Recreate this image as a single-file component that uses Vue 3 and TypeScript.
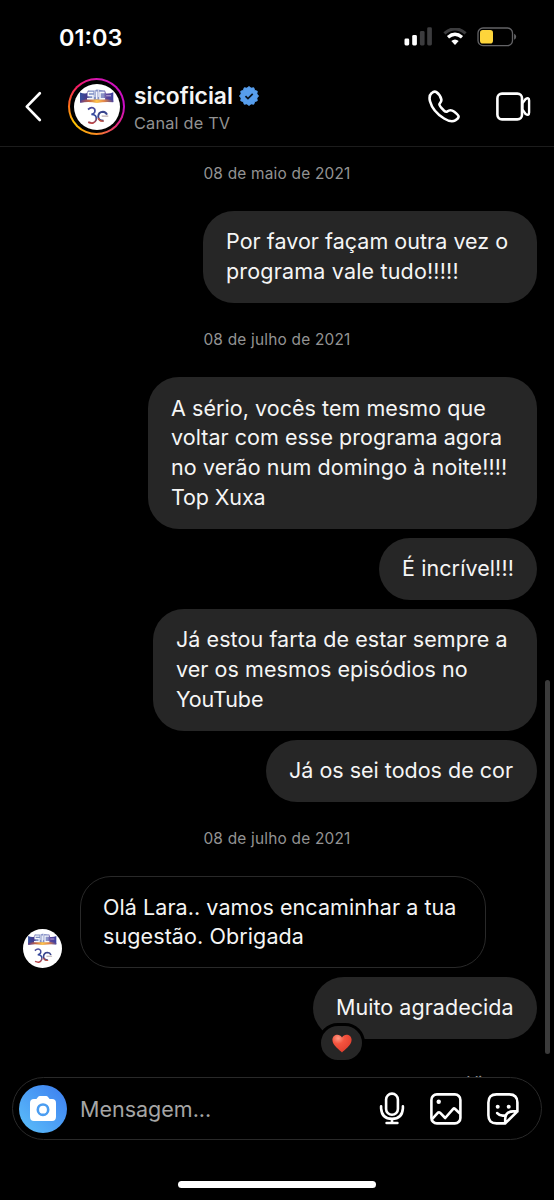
<script setup lang="ts">
interface Line {
  text: string
  spacing?: number
}
interface Message {
  id: number
  incoming?: boolean
  reaction?: boolean
  width: number
  lines: Line[]
}
interface Group {
  date: string
  messages: Message[]
}

const groups: Group[] = [
  {
    date: '08 de maio de 2021',
    messages: [
      {
        id: 1,
        width: 334,
        lines: [{ text: 'Por favor façam outra vez o', spacing: 0.03 }, { text: 'programa vale tudo!!!!!', spacing: 0.18 }],
      },
    ],
  },
  {
    date: '08 de julho de 2021',
    messages: [
      {
        id: 2,
        width: 389,
        lines: [
          { text: 'A sério, vocês tem mesmo que', spacing: 0.05 },
          { text: 'voltar com esse programa agora', spacing: 0.05 },
          { text: 'no verão num domingo à noite!!!!', spacing: 0.1 },
          { text: 'Top Xuxa', spacing: -0.12 },
        ],
      },
      { id: 3, width: 158, lines: [{ text: 'É incrível!!!', spacing: 0.09 }] },
      {
        id: 4,
        width: 384,
        lines: [
          { text: 'Já estou farta de estar sempre a', spacing: 0.07 },
          { text: 'ver os mesmos episódios no', spacing: 0.07 },
          { text: 'YouTube', spacing: -0.12 },
        ],
      },
      { id: 5, width: 271, lines: [{ text: 'Já os sei todos de cor' }] },
    ],
  },
  {
    date: '08 de julho de 2021',
    messages: [
      {
        id: 6,
        incoming: true,
        width: 406,
        lines: [
          { text: 'Olá Lara.. vamos encaminhar a tua', spacing: 0.07 },
          { text: 'sugestão. Obrigada', spacing: 0.1 },
        ],
      },
      { id: 7, reaction: true, width: 224, lines: [{ text: 'Muito agradecida', spacing: 0.04 }] },
    ],
  },
]

const sealPoints = Array.from({ length: 24 }, (_, i) => {
  const radius = i % 2 ? 8.6 : 10.1
  const angle = (i * Math.PI) / 12
  return `${(10.5 + radius * Math.sin(angle)).toFixed(2)},${(10.5 - radius * Math.cos(angle)).toFixed(2)}`
}).join(' ')
</script>

<template>
  <svg class="defs" width="0" height="0" aria-hidden="true">
    <defs>
      <linearGradient id="band" x1="0" y1="0" x2="1" y2="0">
        <stop offset="0" stop-color="#34509f" />
        <stop offset=".2" stop-color="#453a8c" />
        <stop offset=".3" stop-color="#7c8fc4" />
        <stop offset=".7" stop-color="#8c93c8" />
        <stop offset=".8" stop-color="#5d4399" />
        <stop offset="1" stop-color="#3a41a0" />
      </linearGradient>
      <linearGradient id="glow" x1="0" y1="0" x2="1" y2="0">
        <stop offset="0" stop-color="#5b3c8c" />
        <stop offset=".28" stop-color="#c9663f" />
        <stop offset=".5" stop-color="#ffc64c" />
        <stop offset=".72" stop-color="#e58749" />
        <stop offset="1" stop-color="#4c439b" />
      </linearGradient>
      <linearGradient id="three" x1="0" y1="0" x2="0" y2="1">
        <stop offset="0" stop-color="#49499a" />
        <stop offset=".6" stop-color="#304b9f" />
        <stop offset="1" stop-color="#bd4343" />
      </linearGradient>
      <symbol id="logo" viewBox="0 0 46 46">
        <circle cx="23" cy="23" r="23" fill="#fff" />
        <path d="M6 8.4Q9.5 9.8 12.6 9.3L14 6.4H20L22.8 5.6L31 6.4L32 9.4Q36 9.8 39.3 8.2V18Q31 17 23 18.2Q14 17 6 18.4Z" fill="url(#band)" />
        <path d="M6.2 16.6Q14 14.8 23 15.6Q32 14.8 39.2 16.4V18.2Q31 17.4 23 18.9Q14 17.4 6.2 18.8Z" fill="url(#glow)" />
        <path d="M19.4 8.4H14.3V11.4H19V14.8H13M22.7 7.6V15M30.6 8.4H26V14.8H31" fill="none" stroke="#f4f6fc" stroke-width="1.5" />
        <path d="M20.9 5.8V13M24.4 5.8V13" stroke="#fff" stroke-width=".7" />
        <path d="M32.2 11.8H37" stroke="#c6b5dc" stroke-width="1" />
        <path d="M14 25.5Q18.2 22 20.7 25.2Q22 29.5 17.4 30.3Q23.1 30.5 22.2 35.8Q20.3 40.8 14.2 38.2" fill="none" stroke="url(#three)" stroke-width="1.8" />
        <path d="M29.5 36.8Q24.3 36.7 24.2 32.6Q24.5 27.8 29 27.7Q31.8 27.8 33 30.7" fill="none" stroke="#39458d" stroke-width="1.9" />
        <path d="M24.3 34Q25.4 37.8 29.7 37" fill="none" stroke="#c4503e" stroke-width="1.3" />
        <path d="M27.7 32.1H34.3" stroke="#b2a1a6" stroke-width="1.1" />
      </symbol>
    </defs>
  </svg>

  <main class="phone">
    <div class="status">
      <span class="clock">01:03</span>
      <div class="indicators">
        <svg width="29" height="19" viewBox="0 0 29 19">
          <rect x="0.5" y="11.5" width="4.7" height="7" rx="1.4" fill="#fff" />
          <rect x="8.2" y="8" width="4.7" height="10.5" rx="1.4" fill="#fff" />
          <rect x="15.9" y="4" width="4.7" height="14.5" rx="1.4" fill="#3c3c3e" />
          <rect x="23.2" y="0.3" width="4.7" height="18.2" rx="1.4" fill="#3c3c3e" />
        </svg>
        <svg class="wifi" width="24" height="18" viewBox="0 0 24 18">
          <path d="M1.4 5.4Q12-3.6 22.6 5.4" fill="none" stroke="#3c3c3e" stroke-width="3.2" />
          <path d="M5 9.3Q12 3.3 19 9.3" fill="none" stroke="#fff" stroke-width="3.3" />
          <path d="M8.3 13.1Q12 10.1 15.7 13.1L12 17.1Z" fill="#fff" />
        </svg>
        <svg class="battery" width="40" height="20" viewBox="0 0 40 20">
          <rect x="1" y="1" width="34.5" height="17.6" rx="5" fill="none" stroke="#636366" stroke-width="1.3" />
          <rect x="3" y="3" width="13" height="13.5" rx="2.8" fill="#fdd53b" />
          <path d="M37.1 6.8Q39.2 7.6 39.2 9.8T37.1 12.8Z" fill="#636366" />
        </svg>
      </div>
    </div>

    <header class="header">
      <svg class="back" width="18" height="32" viewBox="0 0 18 32">
        <path d="M15.8 3.2L2.8 16.6L15.8 30" fill="none" stroke="#fff" stroke-width="2.7" stroke-linecap="round" stroke-linejoin="round" />
      </svg>
      <div class="ring"><div class="ring-gap"><svg width="46" height="46"><use href="#logo" /></svg></div></div>
      <div class="identity">
        <div class="name-row">
          <span class="name">sicoficial</span>
          <svg width="20" height="20" viewBox="0 0 21 21">
            <polygon :points="sealPoints" fill="#579eed" stroke="#579eed" stroke-width=".8" stroke-linejoin="round" />
            <path d="M6.8 10.7L9.4 13.2L14.4 8.2" fill="none" stroke="#08131f" stroke-width="1.8" />
          </svg>
        </div>
        <span class="subtitle">Canal de TV</span>
      </div>
      <div class="calls">
        <svg width="33" height="33" viewBox="0 0 33 33">
          <path d="M3.7 3.1C1.8 4.7 1.1 7.7 2 11.3C3.7 17.6 9.3 24.4 16.1 28.5C20 30.9 24.7 31.9 27.3 30.4C29.2 29.3 30.6 28 30.6 26.5C30.6 25.1 28.6 23.6 26.3 21.8C23.3 19.5 21.2 19.9 19.2 21.5C18.1 22.3 17.2 21.7 15.6 20.2C13.5 18.1 11.2 15.7 11.4 14.2C11.6 12.8 13.9 11.9 13.3 9.4C12.7 6.8 10.1 3.2 8.4 2.1C6.8 1.1 5 1.9 3.7 3.1Z" fill="none" stroke="#fff" stroke-width="2.6" stroke-linejoin="round" />
        </svg>
        <svg class="video" width="36" height="31" viewBox="0 0 36 31">
          <rect x="1.4" y="2.6" width="24.6" height="25.8" rx="4.6" fill="none" stroke="#fff" stroke-width="2.6" />
          <path d="M26.4 12.4L29.6 8Q33.1 6 33.1 9.4V21.6Q33.1 25 29.6 23L26.4 18.4Z" fill="none" stroke="#fff" stroke-width="2.4" stroke-linejoin="round" />
        </svg>
      </div>
    </header>

    <section class="thread">
      <template v-for="(group, g) in groups" :key="g">
        <p class="date">{{ group.date }}</p>
        <div class="group">
          <div v-for="message in group.messages" :key="message.id" class="row" :class="{ incoming: message.incoming }">
            <svg v-if="message.incoming" class="sender" width="39" height="39"><use href="#logo" /></svg>
            <div class="bubble" :style="{ width: message.width + 'px' }">
              <span v-for="line in message.lines" :key="line.text" class="line" :style="{ letterSpacing: (line.spacing ?? 0) + 'px' }">{{ line.text }}</span>
              <span v-if="message.reaction" class="reaction">
                <svg width="20" height="19" viewBox="0 0 20 19">
                  <defs>
                    <radialGradient id="heart" cx=".3" cy=".2" r=".9">
                      <stop offset="0" stop-color="#ff9a85" />
                      <stop offset=".35" stop-color="#f4543f" />
                      <stop offset="1" stop-color="#dc3a2b" />
                    </radialGradient>
                  </defs>
                  <path d="M10 18.6C8.2 16.4.4 11.6.4 5.8C.4.4 7.4-1.3 10 3.4C12.6-1.3 19.6.4 19.6 5.8C19.6 11.6 11.8 16.4 10 18.6Z" fill="url(#heart)" />
                </svg>
              </span>
            </div>
          </div>
        </div>
      </template>
      <p class="seen">Visto</p>
      <div class="scrollbar"></div>
    </section>

    <footer class="composer">
      <div class="camera">
        <svg width="28" height="27" viewBox="0 0 28 27">
          <path d="M5 4.1H7.4L9.2 1.7Q9.8 1 10.8 1H17.2Q18.2 1 18.8 1.7L20.6 4.1H23Q27 4.1 27 8.1V21.8Q27 26 23 26H5Q1 26 1 21.8V8.1Q1 4.1 5 4.1Z" fill="#fff" />
          <circle cx="14" cy="14.7" r="5.2" fill="none" stroke="#4b9df1" stroke-width="2.6" />
        </svg>
      </div>
      <span class="placeholder">Mensagem...</span>
      <div class="tools">
        <svg width="26" height="33" viewBox="0 0 26 33" fill="none" stroke="#fff" stroke-width="2.6" stroke-linecap="round">
          <rect x="7.1" y="1.6" width="11.8" height="21.2" rx="5.9" />
          <path d="M2.1 14.4V16.3Q2.8 26.8 13 26.9Q23.2 26.8 23.9 16.3V14.4M13 27V30.8M7.6 31H18.4" />
        </svg>
        <svg class="image" width="32" height="32" viewBox="0 0 32 32" fill="none" stroke="#fff" stroke-width="2.6" stroke-linejoin="round">
          <rect x="1.4" y="1.4" width="29" height="29" rx="5.5" />
          <path d="M1.8 26.3L8 19.6Q9 18.8 10 19.7L15.2 25L23.2 15.8Q24 15 24.9 15.8L30.2 20.8" />
          <circle cx="8.7" cy="8.7" r="2.2" fill="#fff" stroke="none" />
        </svg>
        <svg class="sticker" width="32" height="32" viewBox="0 0 32 32" fill="none" stroke="#fff" stroke-width="2.6" stroke-linejoin="round" stroke-linecap="round">
          <path d="M18.2 30.4H9.5Q1.4 30.4 1.4 22.3V9.5Q1.4 1.4 9.5 1.4H22.3Q30.4 1.4 30.4 9.5V18.4L18.2 30.4ZM18.2 30.4V26Q18.4 18.6 26 18.4H30.4M10.2 20.1Q13.1 23.5 18 22.4" />
          <circle cx="10.7" cy="13.7" r="2" fill="#fff" stroke="none" />
          <circle cx="21.7" cy="13.7" r="2" fill="#fff" stroke="none" />
        </svg>
      </div>
    </footer>
    <div class="home"></div>
  </main>
</template>

<style>
body {
  background: #000;
}
</style>

<style scoped>
.defs {
  position: absolute;
}
.phone {
  box-sizing: border-box;
  width: 554px;
  height: 1200px;
  display: flex;
  flex-direction: column;
  overflow: hidden;
  background: #000;
  color: #f5f5f5;
  font-family: Inter, "Liberation Sans", sans-serif;
}
svg {
  display: block;
  flex: none;
}
p {
  margin: 0;
}
.status {
  flex: none;
  height: 68px;
  display: flex;
  justify-content: space-between;
  padding: 0 37px 0 59px;
}
.clock {
  padding-top: 23px;
  font-size: 23.5px;
  line-height: 30px;
  font-weight: 600;
  color: #fff;
}
.indicators {
  display: flex;
  align-items: flex-start;
  padding-top: 27px;
}
.wifi {
  margin: 1px 0 0 10px;
}
.battery {
  margin-left: 10px;
}
.header {
  flex: none;
  box-sizing: border-box;
  height: 79px;
  display: flex;
  padding: 10px 22px 0 24px;
  border-bottom: 1px solid #1c1c1c;
}
.back {
  margin-top: 12px;
}
.ring {
  box-sizing: border-box;
  flex: none;
  width: 57px;
  height: 57px;
  margin-left: 26px;
  padding: 2px;
  border-radius: 50%;
  background: conic-gradient(#d516b2, #cb0bc7 25%, #e52c7b 37%, #fb8a20 50%, #ffc502 65%, #ff6b1b 76%, #f51b66 88%, #d516b2);
}
.ring-gap {
  box-sizing: border-box;
  height: 53px;
  padding: 3.5px;
  border-radius: 50%;
  background: #000;
}
.identity {
  margin-left: 9px;
}
.name-row {
  display: flex;
  align-items: center;
  gap: 6px;
  height: 30px;
  margin-top: 3px;
}
.name {
  font-size: 22.8px;
  line-height: 30px;
  font-weight: 600;
}
.subtitle {
  display: block;
  margin-top: 1px;
  font-size: 16.3px;
  line-height: 22px;
  letter-spacing: 0.2px;
  color: #929292;
}
.calls {
  margin-left: auto;
  display: flex;
  padding-top: 12px;
}
.video {
  margin: 1px 0 0 35px;
}
.thread {
  position: relative;
  flex: none;
  height: 930px;
  overflow: hidden;
}
.date {
  padding-top: 15.6px;
  height: 48.4px;
  text-align: center;
  font-size: 15.4px;
  line-height: 22px;
  letter-spacing: 0.22px;
  color: #939393;
}
.group {
  display: flex;
  flex-direction: column;
  gap: 9px;
  padding: 0 17px 10.6px 23px;
}
.row {
  display: flex;
  justify-content: flex-end;
}
.row.incoming {
  justify-content: flex-start;
  align-items: flex-end;
}
.sender {
  margin-right: 18px;
}
.bubble {
  position: relative;
  box-sizing: border-box;
  padding: 16.2px 0 16px 23px;
  border-radius: 31px;
  background: #262626;
}
.incoming .bubble {
  padding: 15.2px 0 15px 22px;
  border: 1px solid #292929;
  background: #000;
}
.line {
  display: block;
  white-space: nowrap;
  font-size: 21.5px;
  line-height: 29.85px;
}
.reaction {
  position: absolute;
  left: 5px;
  bottom: -24px;
  width: 41px;
  height: 34px;
  display: flex;
  align-items: center;
  justify-content: center;
  border: 3px solid #000;
  border-radius: 21px;
  background: #262626;
}
.seen {
  width: 87px;
  margin: 20.8px 0 0 467px;
  font-size: 16px;
  line-height: 22px;
  letter-spacing: 0.3px;
  color: #939393;
}
.scrollbar {
  position: absolute;
  right: 4px;
  top: 533px;
  width: 5px;
  height: 374px;
  border-radius: 3px;
  background: #3b3b3b;
}
.composer {
  box-sizing: border-box;
  flex: none;
  height: 63px;
  display: flex;
  align-items: center;
  margin: 0 12px;
  padding: 0 22px 0 6px;
  border: 1px solid #292929;
  border-radius: 32px;
}
.camera {
  width: 48px;
  height: 48px;
  display: flex;
  align-items: center;
  justify-content: center;
  border-radius: 50%;
  background: linear-gradient(45deg, #5cc0fa, #3c7df0);
}
.placeholder {
  margin-left: 13px;
  font-size: 21.5px;
  color: #a5a5a5;
}
.tools {
  margin-left: auto;
  display: flex;
  align-items: center;
}
.image {
  margin-left: 25px;
}
.sticker {
  margin-left: 25px;
}
.home {
  flex: none;
  width: 198px;
  height: 7px;
  margin: 41px auto 0;
  border-radius: 4px;
  background: #fff;
}
</style>
